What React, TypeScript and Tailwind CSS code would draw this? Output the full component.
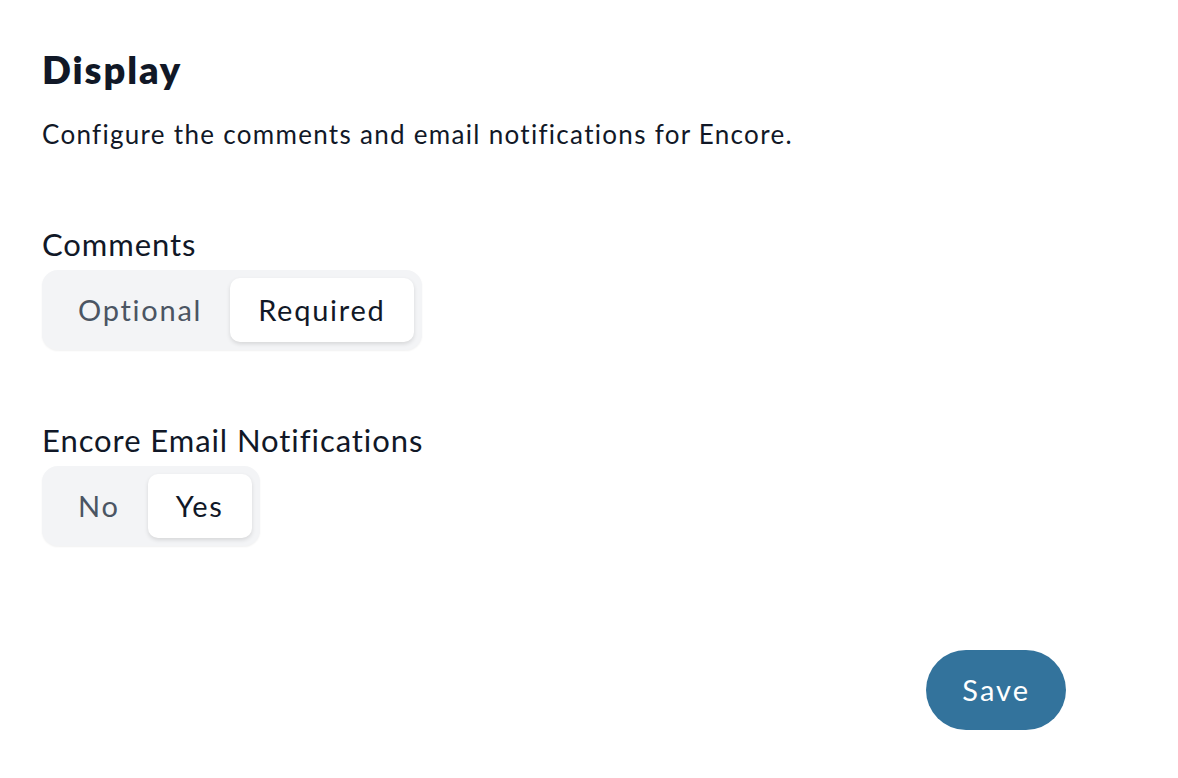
import React, { useState } from 'react';

type Option = { value: string; label: string };

function Segmented({
  options,
  value,
  onChange,
}: {
  options: Option[];
  value: string;
  onChange: (v: string) => void;
}) {
  return (
    <div className="inline-flex rounded-2xl bg-[#f3f4f6] p-2 shadow-[0_1px_2px_rgba(0,0,0,0.06)]">
      {options.map((o) => (
        <button
          key={o.value}
          onClick={() => onChange(o.value)}
          className={`h-16 rounded-[10px] px-[28px] text-[29px] tracking-[0.06em] ${
            value === o.value
              ? 'bg-white text-[#111827] shadow-[0_2px_4px_rgba(0,0,0,0.12)]'
              : 'text-[#4b5563]'
          }`}
        >
          {o.label}
        </button>
      ))}
    </div>
  );
}

export default function App() {
  const [comments, setComments] = useState('required');
  const [emails, setEmails] = useState('yes');

  return (
    <div
      className="min-h-screen bg-white px-[42px] pt-[46px] text-[#111827]"
      style={{ fontFamily: 'Lato, "Open Sans", sans-serif' }}
    >
      <div className="w-[1024px]">
        <h1 className="text-[38px] font-extrabold leading-[46px] tracking-[0.05em]">Display</h1>
        <p className="mt-[26px] text-[26px] leading-[32px] tracking-[0.05em]">
          Configure the comments and email notifications for Encore.
        </p>

        <div className="mt-[76px]">
          <div className="text-[31px] leading-[36px] tracking-[0.03em]">Comments</div>
          <div className="mt-[8px]">
            <Segmented
              value={comments}
              onChange={setComments}
              options={[
                { value: 'optional', label: 'Optional' },
                { value: 'required', label: 'Required' },
              ]}
            />
          </div>
        </div>

        <div className="mt-[72px]">
          <div className="text-[31px] leading-[36px] tracking-[0.03em]">
            Encore Email Notifications
          </div>
          <div className="mt-[8px]">
            <Segmented
              value={emails}
              onChange={setEmails}
              options={[
                { value: 'no', label: 'No' },
                { value: 'yes', label: 'Yes' },
              ]}
            />
          </div>
        </div>

        <div className="mt-[104px] flex justify-end">
          <button className="h-20 rounded-full bg-[#33739c] px-[36px] text-[29px] tracking-[0.07em] text-white">
            Save
          </button>
        </div>
      </div>
    </div>
  );
}
